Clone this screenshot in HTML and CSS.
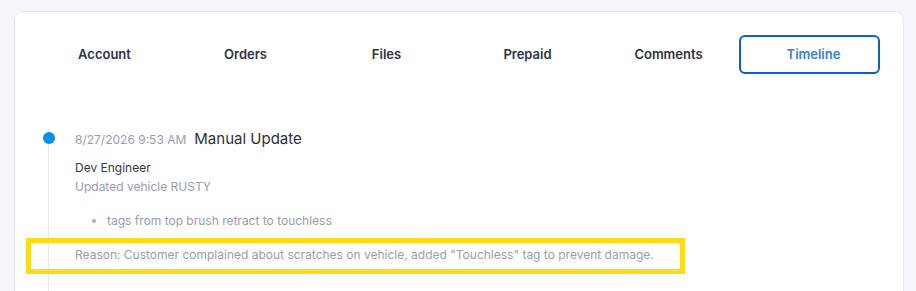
FILE: index.html
```html
<!DOCTYPE html>
<html>
<head>
<meta charset="utf-8">
<link rel="stylesheet" href="styles.css">
</head>
<body>
<div class="card">
  <nav class="tabs">
    <div class="tab">Account</div>
    <div class="tab">Orders</div>
    <div class="tab">Files</div>
    <div class="tab">Prepaid</div>
    <div class="tab">Comments</div>
    <div class="tab active">Timeline</div>
  </nav>
  <div class="timeline">
    <div class="entry">
      <span class="dot"></span>
      <div class="head">
        <span class="date">8/27/2026 9:53 AM</span>
        <span class="title">Manual Update</span>
      </div>
      <div class="user">Dev Engineer</div>
      <div class="muted">Updated vehicle RUSTY</div>
      <ul class="changes">
        <li>tags from top brush retract to touchless</li>
      </ul>
      <div class="reason muted">Reason: Customer complained about scratches on vehicle, added "Touchless" tag to prevent damage.</div>
      <span class="highlight"></span>
    </div>
  </div>
</div>
</body>
</html>
```
FILE: styles.css
```css
* { box-sizing: border-box; }
html, body { margin: 0; padding: 0; }
body {
  background: #f5f6fa;
  font-family: Inter, "Noto Sans", sans-serif;
  width: 916px;
  height: 291px;
  overflow: hidden;
}
.card {
  position: relative;
  margin: 11px 12px 0 14px;
  background: #fff;
  border: 1px solid #e4e6ee;
  border-bottom: none;
  border-radius: 9px 9px 0 0;
  height: 280px;
  overflow: hidden;
  padding: 23px 23px 0 19px;
}
.tabs {
  display: grid;
  grid-template-columns: repeat(6, 141px);
  height: 39px;
}
.tab {
  display: flex;
  align-items: center;
  justify-content: center;
  font-size: 13px;
  font-weight: 600;
  color: #2f3344;
  border: 2px solid transparent;
  border-radius: 6px;
  padding-bottom: 2px;
}
.tab.active {
  border-color: #0b60d1;
  color: #3b7cf5;
  padding-left: 8px;
}
.timeline {
  position: relative;
  margin-top: 55px;
  margin-left: 14px;
  border-left: 1px solid #e6e8ee;
  padding-left: 26px;
  padding-bottom: 40px;
}
.entry { position: relative; }
.dot {
  position: absolute;
  left: -32px;
  top: 3px;
  width: 12px;
  height: 12px;
  border-radius: 50%;
  background: #0a90ea;
}
.head {
  display: flex;
  align-items: baseline;
  gap: 8px;
}
.date {
  font-size: 12px;
  color: #979cb4;
}
.title {
  font-size: 15px;
  color: #2c3040;
}
.user {
  margin-top: 11px;
  font-size: 12px;
  color: #343848;
  line-height: 18px;
}
.muted {
  font-size: 12px;
  color: #979cb4;
  line-height: 18px;
}
.user + .muted { margin-top: 1px; }
.changes {
  margin: 16px 0 0;
  padding-left: 32px;
  font-size: 12px;
  line-height: 18px;
  color: #979cb4;
}
.changes li::marker { color: #a8adc2; }
.reason { margin-top: 16px; }
.highlight {
  position: absolute;
  left: -49px;
  bottom: -10px;
  width: 659px;
  height: 36px;
  border: 5px solid #fcdc1a;
}
```
